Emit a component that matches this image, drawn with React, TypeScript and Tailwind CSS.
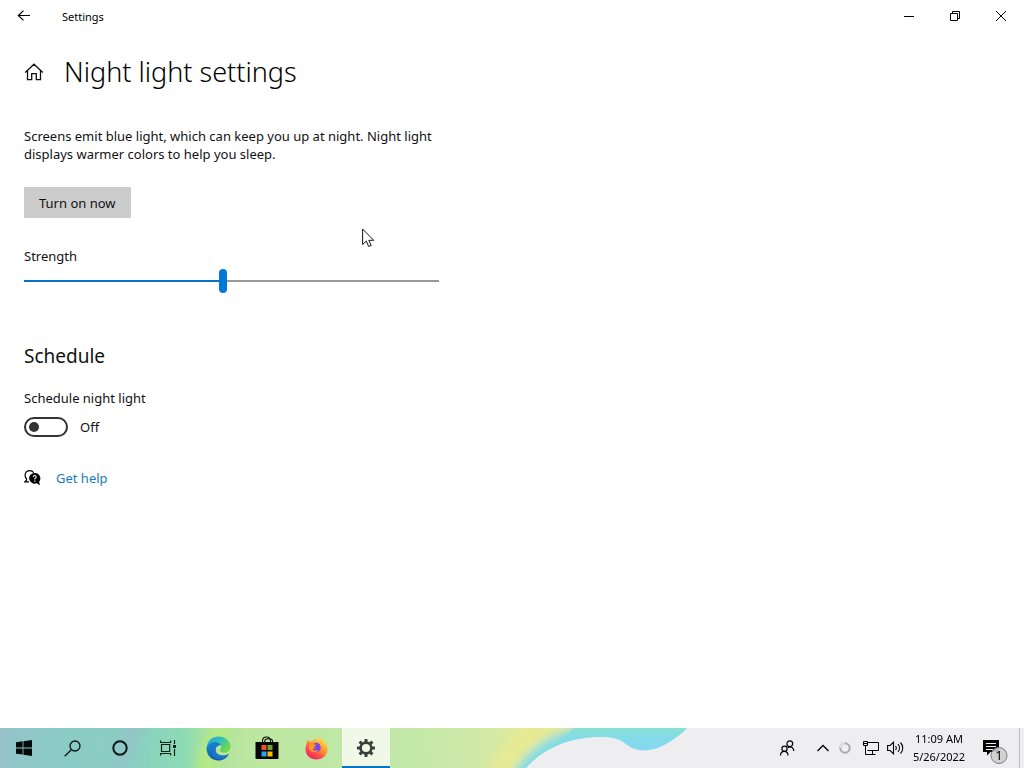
import { useState } from "react";
import type { ReactNode } from "react";

function TitleBar() {
  return (
    <header className="flex h-8 items-center justify-between text-black">
      <div className="flex h-full items-center">
        <button type="button" aria-label="Back" className="flex h-full w-12 items-center justify-center">
          <svg width="14" height="12" viewBox="0 0 14 12" fill="none" stroke="currentColor" strokeWidth="1.2">
            <path d="M13 5.5H1.5M6.5 .6 1.3 5.5l5.2 4.9" />
          </svg>
        </button>
        <span className="pl-3.5 pt-0.5 text-[11px] leading-4">Settings</span>
      </div>
      <div className="flex h-full">
        <button type="button" aria-label="Minimize" className="flex w-[46px] items-center justify-center">
          <svg width="10" height="10" viewBox="0 0 10 10" shapeRendering="crispEdges">
            <path d="M0 5h10v1H0z" />
          </svg>
        </button>
        <button type="button" aria-label="Restore" className="flex w-[46px] items-center justify-center">
          <svg width="10" height="10" viewBox="0 0 10 10" fill="none" stroke="currentColor">
            <path d="M.5 2.5h7v7h-7zM2.5 2.5v-2h7v7h-2" />
          </svg>
        </button>
        <button type="button" aria-label="Close" className="flex w-[46px] items-center justify-center">
          <svg width="10" height="10" viewBox="0 0 10 10" fill="none" stroke="currentColor">
            <path d="m0 0 10 10M10 0 0 10" />
          </svg>
        </button>
      </div>
    </header>
  );
}

function HomeIcon() {
  return (
    <svg width="20" height="18" viewBox="0 0 20 18" fill="none" stroke="currentColor" strokeWidth="1.3">
      <path d="M1.2 9.4 10 1.2l8.8 8.2M3.5 7.6v9h4.2v-6h4.6v6h4.2v-9" />
    </svg>
  );
}

function HelpIcon() {
  return (
    <svg width="17" height="16" viewBox="0 0 17 16">
      <path d="M3 9.500C-.4 6.400 1 .7 5.700.7c2 0 3.300.8 4 2M3 9.500 1 11.800h4" fill="none" stroke="#000" strokeWidth="1.2" />
      <path d="M10.700 2.900a5.400 5.400 0 1 0 1.900 10.400l3.400 1.900-.9-3.500a5.400 5.400 0 0 0-4.400-8.800z" />
      <path d="M9.200 7c.1-2 3-1.900 3 0 0 1.200-1.500 1.200-1.500 2.500M10.700 10.500v1.200" fill="none" stroke="#fff" strokeWidth="1.100" />
    </svg>
  );
}

function NightLight() {
  const [strength, setStrength] = useState(48);
  const [scheduled, setScheduled] = useState(false);
  return (
    <main className="flex-1 px-6 text-[13px] leading-[18px] text-[#111]">
      <div className="flex items-center gap-5 pt-5">
        <a href="#home" aria-label="Home" className="flex"><HomeIcon /></a>
        <h1 className="text-[27px] font-light leading-10 text-black">Night light settings</h1>
      </div>
      <div className="flex max-w-[415px] flex-col items-start pt-[35px]">
        <p>Screens emit blue light, which can keep you up at night. Night light displays warmer colors to help you sleep.</p>
        <button type="button" className="mt-6 h-[31px] bg-[#ccc] px-[15px]">Turn on now</button>
        <label htmlFor="strength" className="mt-[29px]">Strength</label>
        <input
          id="strength"
          type="range"
          min="0"
          max="100"
          value={strength}
          onChange={(e) => setStrength(Number(e.target.value))}
          style={{ backgroundImage: `linear-gradient(to right, #0873c4 ${strength}%, #999 ${strength}%)` }}
          className="mt-1 h-6 w-full appearance-none bg-[length:100%_2px] bg-center bg-no-repeat [&::-webkit-slider-thumb]:h-6 [&::-webkit-slider-thumb]:w-2 [&::-webkit-slider-thumb]:appearance-none [&::-webkit-slider-thumb]:rounded-full [&::-webkit-slider-thumb]:bg-[#0078d7]"
        />
      </div>
      <h2 className="pt-[49px] text-[19px] leading-7">Schedule</h2>
      <label htmlFor="schedule" className="mt-[19px] block">Schedule night light</label>
      <div className="mt-2.5 flex items-center gap-3">
        <input
          id="schedule"
          type="checkbox"
          role="switch"
          checked={scheduled}
          onChange={(e) => setScheduled(e.target.checked)}
          className="flex h-5 w-11 appearance-none items-center rounded-full border-2 border-[#333] px-[3px] before:size-2.5 before:rounded-full before:bg-[#333] checked:justify-end"
        />
        <span>{scheduled ? "On" : "Off"}</span>
      </div>
      <div className="flex items-center gap-[15px] pt-8">
        <HelpIcon />
        <a href="#help" className="text-[#1a7bb9]">Get help</a>
      </div>
    </main>
  );
}

function TaskButton({ label, children, active = false }: { label: string; children: ReactNode; active?: boolean }) {
  return (
    <button
      type="button"
      aria-label={label}
      className={active ? "flex w-12 items-center justify-center border-b-2 border-[#0873c4] bg-[#f0f8e8] pt-0.5" : "flex w-12 items-center justify-center"}
    >
      {children}
    </button>
  );
}

function Wallpaper() {
  return (
    <svg className="absolute inset-0 size-full" viewBox="0 0 1024 40" preserveAspectRatio="none" aria-hidden="true">
      <defs>
        <linearGradient id="wp-base" gradientUnits="userSpaceOnUse" x1="0" y1="0" x2="560" y2="24">
          <stop offset="0" stopColor="#94c6ca" />
          <stop offset=".12" stopColor="#8acbc6" />
          <stop offset=".24" stopColor="#8bcfc2" />
          <stop offset=".33" stopColor="#8cdbb5" />
          <stop offset=".37" stopColor="#a9e29f" />
          <stop offset=".44" stopColor="#bde6a0" />
          <stop offset=".7" stopColor="#c0e8a8" />
          <stop offset=".83" stopColor="#cee9a8" />
          <stop offset="1" stopColor="#e4eb9a" />
        </linearGradient>
        <linearGradient id="wp-wave" x1="0" y1="0" x2="0" y2="1">
          <stop offset="0" stopColor="#88e2d1" />
          <stop offset=".35" stopColor="#84dce6" />
          <stop offset="1" stopColor="#86d7f5" />
        </linearGradient>
        <filter id="wp-soft" x="-10%" y="-50%" width="120%" height="200%">
          <feGaussianBlur stdDeviation="4" />
        </filter>
      </defs>
      <path fill="#eeeef0" d="M0 0h1024v40H0z" />
      <path fill="url(#wp-base)" d="M0 0h600v40H0z" />
      <g filter="url(#wp-soft)">
        <path fill="#9cbdcc" opacity=".5" d="M-5-5h20L5 45H-5zM126-5h22l-26 50h-14z" />
        <path fill="#b7ea82" opacity=".8" d="M195 45c2-22 8-30 18-50h24c-12 18-18 30-20 50z" />
        <path fill="#e6ea94" d="M485 48c10-20 23-36 39-56h60v56z" />
        <path fill="#84dce2" d="M510 48c14-20 32-40 62-47h50v47z" />
      </g>
      <path fill="url(#wp-wave)" d="M573 0h115c-12 10-24 20-39 22-15 3-27 1-34-5-14-9-47-9-63 5z" />
      <path fill="#eeeef0" d="M526 40c19-21 45-31 75-31 18 0 20 4 31 11 19 7 40 1 55-20l1 0h20v40z" />
    </svg>
  );
}

function EdgeIcon() {
  return (
    <svg width="25" height="25" viewBox="0 0 25 25">
      <defs>
        <linearGradient id="edge-top" x1="0" y1="0" x2="1" y2=".6">
          <stop offset="0" stopColor="#17a4d8" />
          <stop offset=".5" stopColor="#31bfc0" />
          <stop offset="1" stopColor="#73d947" />
        </linearGradient>
        <linearGradient id="edge-low" x1="0" y1="0" x2=".7" y2="1">
          <stop offset="0" stopColor="#168fdb" />
          <stop offset="1" stopColor="#124ea1" />
        </linearGradient>
      </defs>
      <path fill="url(#edge-low)" d="M.5 12.500C.5 8 5 5.500 9.500 5.500c4 0 6 2 6 4.500-1-2-6-1-6 4 0 4 5 6 9 5.500 2-.3 3.500-1.300 4.500-1.800C21 22 17 24.500 12.500 24.500 5.500 24.500.5 19 .5 12.500z" />
      <path fill="#1676cf" d="M9.200 8.500C5 11 4.500 18 8.500 21.500c4 3.400 10 2.400 14-3-5 3-13 1-13-4.500 0-3 2-4.500 4-4.500-1-1.300-2.500-1.600-4.300-1z" />
      <path fill="url(#edge-top)" d="M.7 11C1.600 4.500 6.500.5 12.500.5c7 0 12 5 12 10 0 4-3 6-6.500 6-2.500 0-4-1-4-2 0-.8 1.300-1.300 1.300-3.500 0-3-3-5-6.300-5-3.700 0-6.800 2-8.300 5z" />
    </svg>
  );
}

function StoreIcon() {
  return (
    <svg width="24" height="24" viewBox="0 0 24 24">
      <path d="M7.500 7V5q0-4 4-4t4 4v2M9.800 7V5q0-2.200 3.600-2.200 4.100 0 4.100 2.200v2" fill="none" stroke="#050505" strokeWidth="1.100" />
      <path d="M.5 6h23v16.500L22.500 23h-21L.5 22.500z" fill="#050505" />
      <path fill="#f25022" d="M6.500 9h5v5h-5z" />
      <path fill="#6ba52c" d="M12.500 9h5v5h-5z" />
      <path fill="#22a6f2" d="M6.500 15.500h5v5h-5z" />
      <path fill="#ffb900" d="M12.500 15.500h5v5h-5z" />
    </svg>
  );
}

function FirefoxIcon() {
  return (
    <svg width="23" height="24" viewBox="0 0 23 24">
      <defs>
        <linearGradient id="fx-body" x1=".8" y1=".1" x2=".25" y2=".95">
          <stop offset="0" stopColor="#ffe14d" />
          <stop offset=".4" stopColor="#ff9a27" />
          <stop offset=".75" stopColor="#ff4650" />
          <stop offset="1" stopColor="#ed2469" />
        </linearGradient>
      </defs>
      <path fill="url(#fx-body)" d="M2.500 3.500 4.500 6c1-.7 2-.9 3-.8C8.500 3.500 10 2.500 11 2.500c0 1 .5 2 2 3L14 .5c3 2 4 4 5 6l.8-1.200c2 3 3.100 6 2.700 9-.7 5.500-5 9.200-11 9.200C5 23.500.5 19 .5 13c0-2.500.8-4.500 1.500-6z" />
      <path fill="#8045e0" d="M8.500 8c2.500-2.500 6.500-1 7 2 .9 4-1.500 6-4.500 6-2.700 0-4.500-1.500-4.500-3.500 1.700 1 3.300.6 4.500-.5-2-.2-2.500-1.500-4.500-1.500 0-1.200.8-1.500 2-2.500z" />
      <path fill="#ff9729" d="M4 8.500c2-1.700 3.300-1.300 4.300-.3l3.200.5c0 1-1.700 1.200-2.500 2 .2 1-.4 1.500-1.500 2.300C8 15 12 15 13.500 13.500c-1 4-9 3.500-9.500-1.500z" />
    </svg>
  );
}

function GearIcon() {
  return (
    <svg width="20" height="20" viewBox="0 0 20 20" fill="none" stroke="#3b4038">
      <circle cx="10" cy="10" r="5.400" strokeWidth="2.600" />
      <g strokeWidth="3">
        <path d="M10 4V1M10 16v3M4 10H1M16 10h3" />
        <path d="m5.800 5.800-2.200-2.200M14.200 14.200l2.200 2.200M5.800 14.200l-2.200 2.200M14.200 5.800l2.200-2.200" />
      </g>
    </svg>
  );
}

function Tray() {
  return (
    <div className="flex items-center text-black">
      <button type="button" aria-label="People" className="mr-[21px]">
        <svg width="17" height="17" viewBox="0 0 17 17" fill="none" stroke="currentColor" strokeWidth="1.200">
          <circle cx="10.800" cy="3.800" r="2.900" />
          <circle cx="5.500" cy="8.700" r="2.600" />
          <path d="M1.500 15.500c0-5.600 7.500-5.600 7.500 0M9 7.800c3.200-2 5.800.2 5.800 3.200" />
        </svg>
      </button>
      <button type="button" aria-label="Show hidden icons" className="mr-2.5">
        <svg width="12" height="8" viewBox="0 0 12 8" fill="none" stroke="currentColor" strokeWidth="1.300">
          <path d="M.5 7 6 1.500 11.500 7" />
        </svg>
      </button>
      <svg className="mr-3" width="12" height="12" viewBox="0 0 12 12" fill="none" strokeWidth="2">
        <circle cx="6" cy="6" r="4.700" stroke="#aaa" />
        <path d="M6 1.300A4.700 4.700 0 0 0 1.300 6" stroke="#ddd" />
      </svg>
      <button type="button" aria-label="Network" className="mr-2">
        <svg width="16" height="14" viewBox="0 0 16 14" fill="none" stroke="currentColor">
          <path d="M5 1.500h10.500v8h-11M9.500 9.500v4M2.500 4.500v9h10M.5.5h4v4h-4zM1 2.500h3" />
        </svg>
      </button>
      <button type="button" aria-label="Volume" className="mr-2">
        <svg width="17" height="14" viewBox="0 0 17 14" fill="none" stroke="currentColor" strokeWidth="1.100">
          <path d="M.6 4.500h2.600l3.300-3.300v11.600L3.200 9.500H.6zM8.500 5c1 1.200 1 2.800 0 4M11 3.200c2 2.200 2 5.400 0 7.600M13.500 1.500c3 3.200 3 7.800 0 11" />
        </svg>
      </button>
      <div className="flex w-[54px] flex-col items-center text-[11px] leading-[18px] whitespace-nowrap">
        <time>11:09 AM</time>
        <time>5/26/2022</time>
      </div>
      <button type="button" aria-label="Notifications, 1 new" className="ml-[17px] mr-[11px] pt-2">
        <svg width="25" height="24" viewBox="0 0 25 24">
          <path fill="#050505" d="M0 0h16v12H7.500L4 15.500V12H0z" />
          <path stroke="#eee" d="M3 3.500h10M3 6.500h10M3 9.500h7" />
          <circle cx="16" cy="15.500" r="8" fill="#cdcdcd" fillOpacity=".9" stroke="#7d7d7d" />
          <text x="16" y="20" textAnchor="middle" className="text-[13px]">1</text>
        </svg>
      </button>
      <span className="h-10 w-[5px] border-l border-[#bbb]" />
    </div>
  );
}

function Taskbar() {
  return (
    <footer className="relative h-10 overflow-hidden">
      <Wallpaper />
      <div className="relative flex h-full items-stretch justify-between">
        <div className="flex">
          <TaskButton label="Start">
            <svg width="16" height="16" viewBox="0 0 16 16" fill="#050b0b">
              <path d="M0 2.200 6.600 1.300v6.200H0zM7.400 1.200 16 0v7.500H7.400zM0 8.400h6.600v6.200L0 13.700zM7.400 8.400H16V16l-8.600-1.200z" />
            </svg>
          </TaskButton>
          <TaskButton label="Search">
            <svg width="17" height="17" viewBox="0 0 17 17" fill="none" stroke="#111" strokeWidth="1.300">
              <circle cx="11" cy="6" r="5" />
              <path d="M7.300 9.700.7 16.300" />
            </svg>
          </TaskButton>
          <TaskButton label="Cortana">
            <svg width="16" height="16" viewBox="0 0 16 16" fill="none" stroke="#07191b" strokeWidth="2">
              <circle cx="8" cy="8" r="6.700" />
            </svg>
          </TaskButton>
          <TaskButton label="Task View">
            <svg width="17" height="16" viewBox="0 0 17 16" fill="none" stroke="#10201b" strokeWidth="1.200">
              <path d="M.6.500v2h10v-2M1.500 4.500h8.200v7H1.500zM.6 15.500v-2h10v2M14.500 0v4M14.500 9v7" />
              <path d="M13 5h3v3h-3z" fill="#10201b" stroke="none" />
            </svg>
          </TaskButton>
          <div className="flex gap-px pl-0.5">
            <TaskButton label="Microsoft Edge"><EdgeIcon /></TaskButton>
            <TaskButton label="Microsoft Store"><StoreIcon /></TaskButton>
            <TaskButton label="Firefox"><FirefoxIcon /></TaskButton>
          </div>
          <div className="flex pl-0.5">
            <TaskButton label="Settings" active><GearIcon /></TaskButton>
          </div>
        </div>
        <Tray />
      </div>
    </footer>
  );
}

export default function App() {
  return (
    <div className="relative flex min-h-screen flex-col bg-white font-['Noto_Sans','Open_Sans',sans-serif]">
      <TitleBar />
      <NightLight />
      <Taskbar />
      <svg className="pointer-events-none absolute left-[362px] top-[228px]" width="13" height="20" viewBox="0 0 13 20" aria-hidden="true">
        <path d="M.6 1v15.500l3.700-3.400 2.400 5.400 2.500-1.100-2.400-5.100h4.900z" fill="#fff" stroke="#111" strokeWidth="1" />
      </svg>
    </div>
  );
}
